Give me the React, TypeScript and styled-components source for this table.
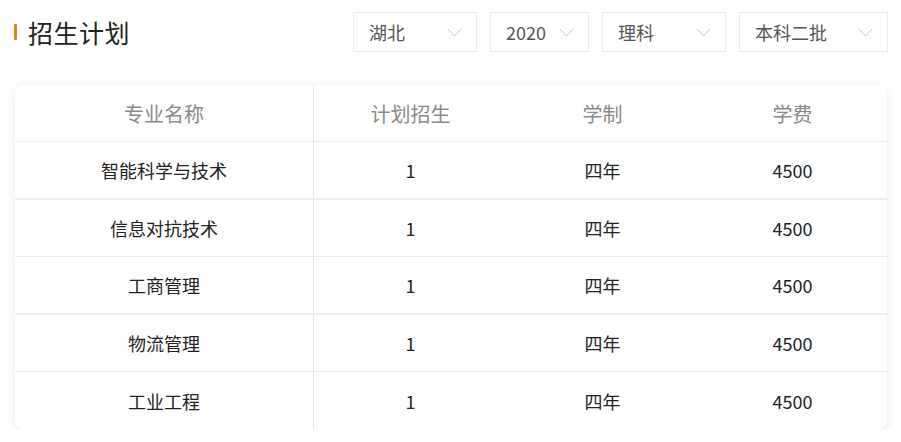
import styled, { createGlobalStyle } from "styled-components"

const GlobalStyle = createGlobalStyle`
  html, body {
    margin: 0;
    padding: 0;
    background: #fff;
    font-family: "Noto Sans CJK SC", "Noto Sans", sans-serif;
  }
`

const Page = styled.div`
  box-sizing: border-box;
  width: 901px;
  padding: 12px 13px 0 15px;
`

const TopBar = styled.div`
  display: flex;
  align-items: center;
  height: 40px;
`

const Title = styled.h1`
  display: flex;
  align-items: center;
  margin: 0;
  flex: 1;
  font-size: 25px;
  font-weight: 400;
  color: #222;
  letter-spacing: 0.5px;

  &::before {
    content: "";
    width: 3px;
    height: 16px;
    margin: 0 11px 0 -1px;
    background: #f07d1a;
    border-radius: 1px;
  }
`

const Selects = styled.div`
  display: flex;
  gap: 13px;
`

const SelectBox = styled.div<{ $w: number }>`
  box-sizing: border-box;
  width: ${(p) => p.$w}px;
  height: 40px;
  display: flex;
  align-items: center;
  justify-content: space-between;
  padding: 0 14px 0 15px;
  border: 1px solid #eaeaea;
  font-size: 18px;
  color: #555;
`

const Chevron = () => (
  <svg width="15" height="9" viewBox="0 0 15 9">
    <polyline points="1,1 7.5,8 14,1" fill="none" stroke="#c4c4c4" strokeWidth="1" />
  </svg>
)

const Card = styled.div`
  margin-top: 33px;
  width: 872px;
  background: #fff;
  border-radius: 8px;
  box-shadow: 0 2px 10px rgba(0, 0, 0, 0.1);
  overflow: hidden;
`

const Row = styled.div<{ $thick?: boolean; $last?: boolean }>`
  display: grid;
  grid-template-columns: 299px 193px 191px 1fr;
  height: 57.4px;
  box-sizing: border-box;
  border-bottom: ${(p) => (p.$last ? "none" : p.$thick ? "2px solid #eeeeee" : "1px solid #ebebeb")};
`

const Cell = styled.div<{ $head?: boolean; $divider?: boolean }>`
  display: flex;
  align-items: center;
  justify-content: center;
  font-size: ${(p) => (p.$head ? "20px" : "18px")};
  color: ${(p) => (p.$head ? "#8a8a8a" : "#222")};
  border-right: ${(p) => (p.$divider ? "1px solid #e6e6e6" : "none")};
`

const selects = [
  { label: "湖北", w: 124 },
  { label: "2020", w: 99 },
  { label: "理科", w: 124 },
  { label: "本科二批", w: 149 },
]

const headers = ["专业名称", "计划招生", "学制", "学费"]

const rows = [
  ["智能科学与技术", "1", "四年", "4500"],
  ["信息对抗技术", "1", "四年", "4500"],
  ["工商管理", "1", "四年", "4500"],
  ["物流管理", "1", "四年", "4500"],
  ["工业工程", "1", "四年", "4500"],
]

export default function App() {
  return (
    <Page>
      <GlobalStyle />
      <TopBar>
        <Title>招生计划</Title>
        <Selects>
          {selects.map((s) => (
            <SelectBox key={s.label} $w={s.w}>
              <span>{s.label}</span>
              <Chevron />
            </SelectBox>
          ))}
        </Selects>
      </TopBar>
      <Card>
        <Row>
          {headers.map((h, i) => (
            <Cell key={h} $head $divider={i === 0}>
              {h}
            </Cell>
          ))}
        </Row>
        {rows.map((r, ri) => (
          <Row key={r[0]} $thick={ri === 0 || ri === 2} $last={ri === rows.length - 1}>
            {r.map((c, ci) => (
              <Cell key={ci} $divider={ci === 0}>
                {c}
              </Cell>
            ))}
          </Row>
        ))}
      </Card>
    </Page>
  )
}
